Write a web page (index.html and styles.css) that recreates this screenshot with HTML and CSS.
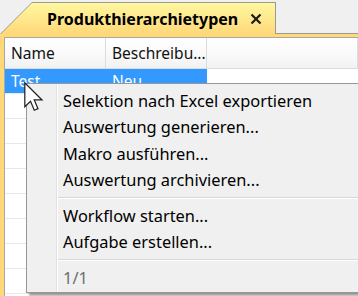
FILE: index.html
```
<!DOCTYPE html>
<html lang="de">
<head>
  <meta charset="UTF-8">
  <title>Produkthierarchietypen</title>
  <link rel="stylesheet" href="styles.css">
</head>
<body>
  <div class="tab-strip">
    <div class="tab">
      <div class="tab-face">
        <span class="tab-title">Produkthierarchietypen</span>
        <svg class="tab-close" width="12" height="12" viewBox="0 0 12 12">
          <path d="M1.5 1.5 L10.5 10.5 M10.5 1.5 L1.5 10.5" stroke="#1a1a1a" stroke-width="2.2" fill="none"/>
        </svg>
      </div>
    </div>
    <div class="strip-rest"></div>
  </div>

  <div class="frame">
    <div class="grid">
      <div class="row head">
        <div class="cell c1">Name</div>
        <div class="cell c2">Beschreibu...</div>
        <div class="cell c3"></div>
      </div>
      <div class="row selected">
        <div class="cell c1">Test</div>
        <div class="cell c2">Neu</div>
        <div class="cell c3"></div>
      </div>
      <div class="row"><div class="cell c1"></div><div class="cell c2"></div><div class="cell c3"></div></div>
      <div class="row"><div class="cell c1"></div><div class="cell c2"></div><div class="cell c3"></div></div>
      <div class="row"><div class="cell c1"></div><div class="cell c2"></div><div class="cell c3"></div></div>
      <div class="row"><div class="cell c1"></div><div class="cell c2"></div><div class="cell c3"></div></div>
      <div class="row"><div class="cell c1"></div><div class="cell c2"></div><div class="cell c3"></div></div>
      <div class="row"><div class="cell c1"></div><div class="cell c2"></div><div class="cell c3"></div></div>
      <div class="row"><div class="cell c1"></div><div class="cell c2"></div><div class="cell c3"></div></div>
      <div class="row"><div class="cell c1"></div><div class="cell c2"></div><div class="cell c3"></div></div>
    </div>
  </div>

  <!-- Kontextmenü -->
  <div class="menu">
    <div class="item">Selektion nach Excel exportieren</div>
    <div class="item">Auswertung generieren...</div>
    <div class="item">Makro ausführen...</div>
    <div class="item">Auswertung archivieren...</div>
    <div class="sep"></div>
    <div class="item">Workflow starten...</div>
    <div class="item">Aufgabe erstellen...</div>
    <div class="sep"></div>
    <div class="item disabled">1/1</div>
  </div>

  <svg class="cursor" width="21" height="31" viewBox="0 0 13.5 20">
    <path d="M0.5 0.5 L0.5 16 L4.2 12.4 L6.6 18.2 L9 17.2 L6.6 11.6 L11.6 11.6 Z" fill="#fff" stroke="#222" stroke-width="0.8" stroke-linejoin="miter"/>
  </svg>
</body>
</html>
```

FILE: styles.css
```
* {
  margin: 0;
  padding: 0;
  box-sizing: border-box;
}
body {
  width: 358px;
  height: 296px;
  overflow: hidden;
  background-color: #f0f0f0;
  font-family: 'Noto Sans', 'Open Sans', sans-serif;
  position: relative;
}
.tab-strip {
  display: flex;
  height: 34px;
  padding-top: 2px;
}
.tab {
  width: 276px;
  height: 32px;
  background-color: #9a9a9a;
  clip-path: polygon(0 100%, 32px 0, 100% 0, 100% 100%);
  padding: 1px 1px 0 1px;
}
.tab-face {
  height: 100%;
  background: linear-gradient(#fff79e, #ffe58a 60%, #ffd877);
  clip-path: polygon(0 100%, 31px 0, 100% 0, 100% 100%);
  display: flex;
  align-items: center;
  padding-left: 46px;
  gap: 12px;
}
.tab-title {
  font-weight: bold;
  font-size: 16px;
  color: #000;
}
.strip-rest {
  flex-grow: 1;
  border-bottom: 1px solid #9a9a9a;
}
.frame {
  background-color: #ffd877;
  padding: 3px 0 0 4px;
  height: 262px;
}
.grid {
  background-color: #fff;
  border-top: 1px solid #a8a8a8;
  border-left: 1px solid #a8a8a8;
  height: 100%;
}
.row {
  display: flex;
  height: 25px;
  border-bottom: 1px solid #e8e8e8;
}
.row.head {
  height: 31px;
  background: linear-gradient(#ffffff, #fafafa 50%, #f2f2f2);
  border-bottom: 1px solid #dcdcdc;
}
.cell {
  font-size: 15.5px;
  color: #111;
  display: flex;
  align-items: center;
  padding-left: 6px;
  border-right: 1px solid #e8e8e8;
  white-space: nowrap;
  overflow: hidden;
}
.head .cell {
  border-right: 1px solid #dcdcdc;
}
.c1 { width: 101px; }
.c2 { width: 101px; }
.c3 { flex-grow: 1; border-right: none; }
.selected .c1, .selected .c2 {
  background-color: #3399ff;
  color: #fff;
  border-right-color: #3399ff;
}
.menu {
  position: absolute;
  left: 26px;
  top: 83px;
  width: 336px;
  height: 210px;
  background-color: #f0f0f0;
  border: 1px solid #979797;
  box-shadow: 3px 3px 2px rgba(0, 0, 0, 0.35);
  padding: 3px 2px 0 2px;
  background-image: linear-gradient(90deg, transparent 29px, #e2e2e2 29px, #e2e2e2 30px, #ffffff 30px, #ffffff 31px, transparent 31px);
}
.item {
  height: 26.5px;
  display: flex;
  align-items: center;
  padding-left: 34px;
  font-size: 16.4px;
  color: #000;
  white-space: nowrap;
}
.item.disabled {
  color: #6d6d6d;
}
.sep {
  height: 9px;
  margin-left: 29px;
  display: flex;
  flex-direction: column;
  justify-content: center;
}
.sep::before {
  content: '';
  display: block;
  height: 1px;
  background-color: #d7d7d7;
}
.sep::after {
  content: '';
  display: block;
  height: 1px;
  background-color: #ffffff;
}
.cursor {
  position: absolute;
  left: 24px;
  top: 82px;
}
```
